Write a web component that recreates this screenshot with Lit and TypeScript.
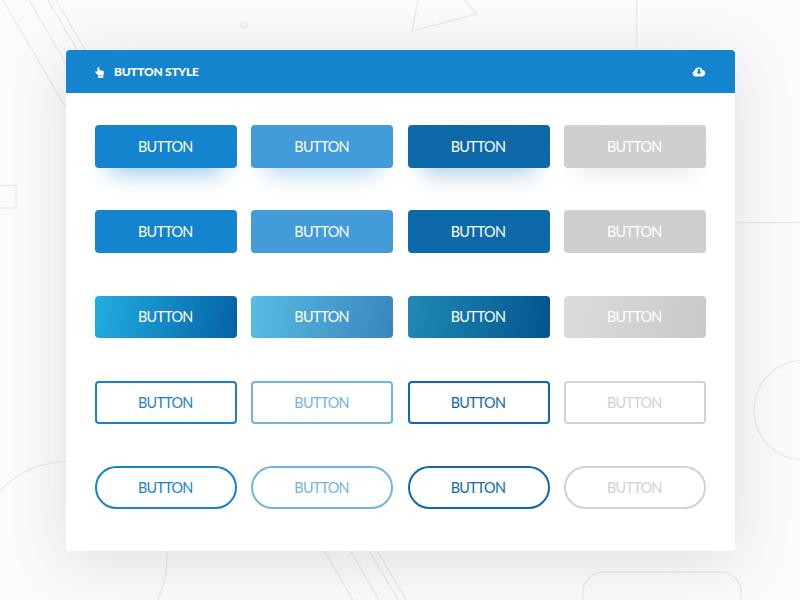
import { LitElement, html, css, svg } from "lit";
import { customElement } from "lit/decorators.js";

const rows = ["flat shadow", "flat", "grad", "line", "line pill"];
const tones = ["a", "b", "c", "d"];

@customElement("app-root")
export class AppRoot extends LitElement {
  static styles = css`
    :host { display: block; width: 800px; height: 600px; position: relative; overflow: hidden; background: #fbfbfc; font-family: "Lato", "Liberation Sans", sans-serif; }
    .bg { position: absolute; inset: 0; width: 800px; height: 600px; }
    .stage { position: relative; box-sizing: border-box; height: 600px; padding: 50px 65px 49px 66px; }
    .card { height: 501px; background: #fff; border-radius: 4px; box-shadow: 0 10px 60px rgba(40,50,70,.14); display: flex; flex-direction: column; }
    header { height: 43px; flex: none; box-sizing: border-box; background: #1484ce; border-radius: 4px 4px 0 0; display: flex; align-items: center; padding: 0 29px 0 28px; color: #fff; }
    header svg { display: block; }
    .title { margin-left: 10px; font-size: 12px; font-weight: 900; letter-spacing: -.28px; flex: 1; }
    .grid { position: relative; z-index: 0; display: grid; grid-template-columns: repeat(4, 142px); grid-auto-rows: 42.67px; column-gap: 14.33px; row-gap: 42.67px; padding: 32px 29px 0 29px; }
    .btn { box-sizing: border-box; display: flex; align-items: center; justify-content: center; border-radius: 4px; font-size: 14.4px; letter-spacing: -.75px; padding: 0 1.5px .4px 0; color: #fff; position: relative; }
    .flat.a { background: #1484ce; } .flat.b { background: #439bda; } .flat.c { background: #0e69a8; } .flat.d { background: #cfcfcf; }
    .shadow::after { content: ""; position: absolute; left: 14px; right: 14px; top: 20px; bottom: -6px; z-index: -1; border-radius: 8px; filter: blur(11px); }
    .shadow.a::after { background: rgba(20,132,206,.42); } .shadow.b::after { background: rgba(67,155,218,.42); } .shadow.c::after { background: rgba(14,105,168,.34); } .shadow.d::after { background: rgba(150,150,150,.22); }
    .grad.a { background: linear-gradient(100deg, #22aee2, #0462a5); }
    .grad.b { background: linear-gradient(100deg, #57bde5, #3a85bd); }
    .grad.c { background: linear-gradient(100deg, #1f8ab5, #02558f); }
    .grad.d { background: linear-gradient(100deg, #dcdcdc, #c9c9c9); }
    .line { border: 2px solid; background: #fff; }
    .line.a { border-color: #1a82cc; color: #1a82cc; }
    .line.b { border-color: #72b5e4; color: #72b5e4; }
    .line.c { border-color: #0e69a8; color: #0e69a8; }
    .line.d { border-color: #d2d2d2; color: #d2d2d2; }
    .pill { border-radius: 22px; }
  `;

  render() {
    const s = "#ebebed";
    return html`
      <svg class="bg" viewBox="0 0 800 600" fill="none" stroke=${s} stroke-width="1.5">
        ${svg`
          <line x1="3" y1="0" x2="353" y2="600"/>
          <line x1="29" y1="0" x2="379" y2="600"/>
          <line x1="48" y1="0" x2="398" y2="600"/>
          <line x1="56" y1="0" x2="406" y2="600"/>
          <circle cx="243.5" cy="25" r="3"/>
          <polyline points="418,0 412,31 477,14 463,-2"/>
          <rect x="-10" y="185.500" width="26" height="22.500"/>
          <line x1="636.500" y1="0" x2="636.500" y2="50"/>
          <line x1="735" y1="222.500" x2="800" y2="222.500"/>
          <circle cx="70" cy="558" r="97"/>
          <circle cx="804" cy="410" r="50"/>
          <rect x="583" y="572" width="158" height="60" rx="20"/>
        `}
      </svg>
      <div class="stage">
        <div class="card">
          <header>
            <svg width="10" height="12" viewBox="0 0 10 12" fill="#fff">
              <path d="M3.400 1.700 Q4.400 .8 5.400 1.700 L5.600 4.200 L8.800 4.800 Q10 5 10 6.200 L9.500 8.900 H3.800 L1 6 Q1.300 5 2.200 5.300 L3.400 6 Z"/>
              <path d="M3.900 9.400 H9.400 V11.800 H3.900 Z"/>
            </svg>
            <span class="title">BUTTON STYLE</span>
            <svg width="14" height="11" viewBox="0 0 14 11">
              <path fill="#fff" d="M3.200 10.500 A3 3 0 0 1 2.500 4.700 A4.300 4.300 0 0 1 10.600 3.900 A3.400 3.400 0 0 1 10.800 10.500 Z"/>
              <path fill="#1484ce" d="M6 3 H8 V5.700 H9.600 L7 8.600 L4.400 5.700 H6 Z"/>
            </svg>
          </header>
          <div class="grid">
            ${rows.flatMap((r) => tones.map((t) => html`<div class="btn ${r} ${t}">BUTTON</div>`))}
          </div>
        </div>
      </div>
    `;
  }
}
